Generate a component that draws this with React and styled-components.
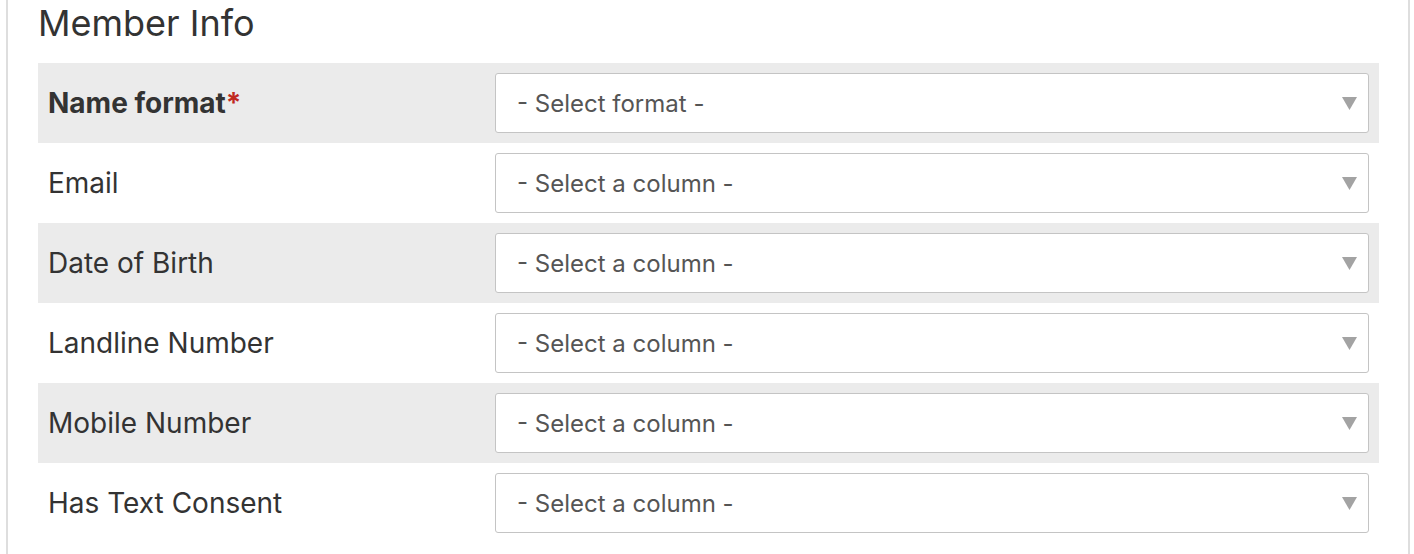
import React from "react";
import styled, { createGlobalStyle } from "styled-components";

const GlobalStyle = createGlobalStyle`
  html, body {
    margin: 0;
    padding: 0;
    background: #ffffff;
    font-family: Inter, "Noto Sans", sans-serif;
  }
`;

const fields = [
  { label: "Name format", required: true, placeholder: "- Select format -" },
  { label: "Email", placeholder: "- Select a column -" },
  { label: "Date of Birth", placeholder: "- Select a column -" },
  { label: "Landline Number", placeholder: "- Select a column -" },
  { label: "Mobile Number", placeholder: "- Select a column -" },
  { label: "Has Text Consent", placeholder: "- Select a column -" },
];

const App = () => {
  return (
    <>
      <GlobalStyle />
      <Panel>
        <Heading>Member Info</Heading>
        <Rows>
          {fields.map((f, i) => (
            <Row key={f.label} $shaded={i % 2 === 0}>
              <Label $bold={f.required}>
                {f.label}
                {f.required && <Required>*</Required>}
              </Label>
              <Select>
                <span>{f.placeholder}</span>
                <Arrow viewBox="0 0 15 13">
                  <polygon points="0,0 15,0 7.5,13" />
                </Arrow>
              </Select>
            </Row>
          ))}
        </Rows>
      </Panel>
    </>
  );
};

const Panel = styled.div`
  margin: -20px 0 0 6px;
  width: 1404px;
  height: 600px;
  box-sizing: border-box;
  border: 2px solid #dedede;
  padding: 0 29px 0 30px;
`;

const Heading = styled.h2`
  margin: 0;
  padding-top: 19px;
  height: 81px;
  box-sizing: border-box;
  font-size: 36px;
  font-weight: 400;
  color: #333333;
  line-height: 45px;
`;

const Rows = styled.div`
  display: flex;
  flex-direction: column;
`;

const Row = styled.div`
  display: grid;
  grid-template-columns: 447px 1fr;
  align-items: center;
  height: 80px;
  box-sizing: border-box;
  padding: 10px 10px 10px 10px;
  background: ${(p) => (p.$shaded ? "#ebebeb" : "#ffffff")};
`;

const Label = styled.div`
  font-size: 28px;
  font-weight: ${(p) => (p.$bold ? 700 : 400)};
  color: #333333;
`;

const Required = styled.span`
  color: #c0291f;
`;

const Select = styled.div`
  display: flex;
  align-items: center;
  justify-content: space-between;
  height: 60px;
  box-sizing: border-box;
  background: #ffffff;
  border: 1px solid #c4c4c4;
  border-radius: 3px;
  padding: 0 11px 0 21px;
  font-size: 24px;
  color: #555555;
`;

const Arrow = styled.svg`
  width: 15px;
  height: 13px;
  fill: #a3a3a3;
`;

export default App;
